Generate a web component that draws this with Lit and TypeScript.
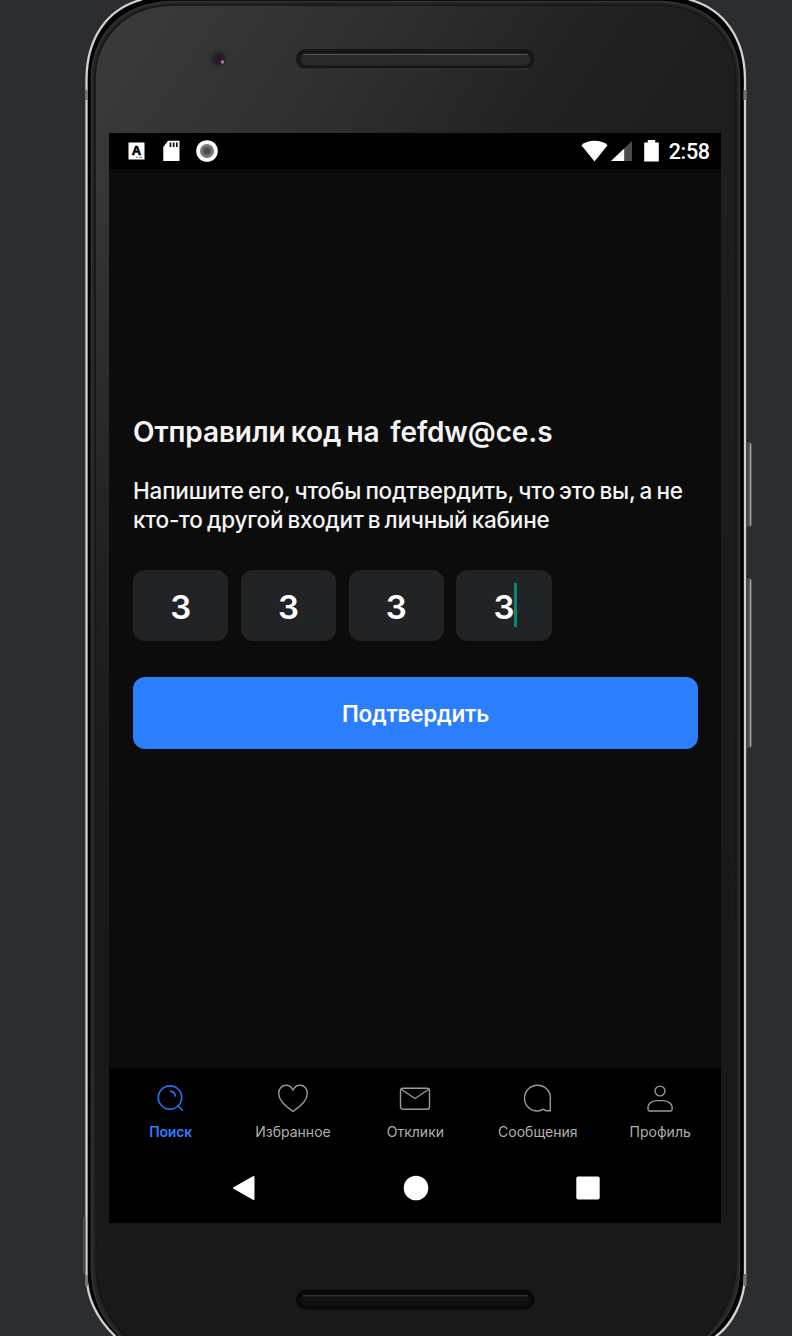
import { LitElement, html, css, svg } from "lit";
import { customElement } from "lit/decorators.js";

const tabs = [
  {
    label: "Поиск",
    cls: "search",
    icon: svg`<circle cx="15" cy="13.5" r="11.7"/><path d="M15 7.2c3.4.2 5.3 2.2 5.4 5.5M23.2 22l4.600 4.600"/>`,
  },
  {
    label: "Избранное",
    cls: "fav",
    icon: svg`<path d="M16 27.300C10.500 23.800 1.700 17.300 1.700 9.300C1.700 4.500 5 1.200 9 1.200C12 1.200 14.500 3 16 6C17.500 3 20 1.200 23 1.200C27 1.200 30.300 4.500 30.300 9.300C30.300 17.300 21.500 23.800 16 27.300Z"/>`,
  },
  {
    label: "Отклики",
    cls: "mail",
    icon: svg`<rect x="1.500" y="4.300" width="29" height="21" rx="2.500"/><path d="M2.500 5.500L16 14.500L29.500 5.500"/>`,
  },
  {
    label: "Сообщения",
    cls: "chat",
    icon: svg`<path d="M28.300 14.200V26.700H24L21.500 25.200C19.800 26.300 17.800 27 15.500 27C8.200 27 2.500 21.300 2.500 14.200C2.500 7 8.200 1.200 15.500 1.200C22.800 1.200 28.500 7 28.500 14.200Z"/>`,
  },
  {
    label: "Профиль",
    cls: "user",
    icon: svg`<circle cx="16" cy="7" r="4.900"/><path d="M4 24.800C3.600 19.500 8 16.800 12.500 16.600H19.500C24 16.800 28.400 19.500 28.200 24.800Q28 27 26.500 27H5.500Q4 27 4 24.800Z"/>`,
  },
];

@customElement("phone-shell")
class PhoneShell extends LitElement {
  static styles = css`
    :host { display: block; }
    .art { display: block; }
  `;
  render() {
    return html`<svg class="art" width="792" height="1336" viewBox="0 0 792 1336">
      <defs>
        <linearGradient id="body" gradientUnits="userSpaceOnUse" x1="90" y1="20" x2="560" y2="330">
          <stop offset="0" stop-color="#3b3b3b"/><stop offset=".4" stop-color="#303030"/>
          <stop offset=".75" stop-color="#222"/><stop offset="1" stop-color="#1e1e1e"/>
        </linearGradient>
        <linearGradient id="fade" x1="0" y1="0" x2="0" y2="1">
          <stop offset=".15" stop-color="#191919" stop-opacity="0"/><stop offset=".7" stop-color="#191919"/>
        </linearGradient>
        <clipPath id="inner">
          <path d="M95 80C95 38 125 6 172 5H660C706 6 736 38 736 80V1265C736 1300 716 1330 690 1350H142C112 1330 96 1300 96 1265Z"/>
        </clipPath>
      </defs>
      <path d="M86.500 80C86.500 38 106 10 142 0V-6H690V0C726 10 745.500 38 745.500 80V1275C745 1300 732 1325 716 1336V1346H115V1336C98 1320 87 1300 86.500 1275Z" fill="#030303"/>
      <path d="M91.500 80C91.500 38 118 3 172 1.500H660C712 3 739.500 38 739.500 80V1270C739 1305 722 1328 698 1345H130C108 1328 92 1305 91.500 1270Z" fill="#252525" stroke="#333" stroke-width="1.500"/>
      <g clip-path="url(#inner)">
        <rect x="90" y="0" width="650" height="1340" fill="url(#body)"/>
        <rect x="90" y="0" width="650" height="1340" fill="url(#fade)"/>
      </g>
      <path d="M95 80C95 38 125 6 172 5H660C706 6 736 38 736 80V1265C736 1300 716 1330 690 1350H142C112 1330 96 1300 96 1265Z" fill="none" stroke="#161616" stroke-width="1.500"/>
      <g fill="none" stroke="#d2d2d2" stroke-width="2.300">
        <path d="M142 -.5C107 9 86.500 38 86.500 80V1275C87 1300 98 1320 116 1337"/>
        <path d="M689 -.5C724 9 745 38 745 80V1275C745 1300 732 1325 715 1337"/>
      </g>
      <path d="M86.500 90v10M745 90v10M86.500 1275v11M745 1274v12" stroke="#747474" stroke-width="3"/>
      <g fill="#4b4b4c">
        <rect x="746.500" y="442" width="5" height="85" rx="1.500"/>
        <rect x="746.500" y="578" width="5" height="170" rx="1.500"/>
        <rect x="83" y="1217" width="2.500" height="56"/>
      </g>
      <path d="M750.500 443.500v82M750.500 579.500v167" stroke="#a0a0a0" stroke-width="1.600"/>
      <circle cx="218.500" cy="59" r="11" fill="#343334"/>
      <circle cx="218.500" cy="59" r="7.500" fill="#28262c"/>
      <circle cx="219" cy="59" r="4.500" fill="#211c30"/>
      <circle cx="222.500" cy="62" r="1.700" fill="#b87e86"/>
      <rect x="296" y="49" width="238.500" height="20" rx="10" fill="#161616"/>
      <rect x="300.500" y="53.500" width="230" height="12" rx="6" fill="#292929"/>
      <path d="M303 54.500H528" stroke="#555"/>
      <path d="M305 69H528" stroke="#3a3a3a"/>
      <rect x="296" y="1289.500" width="238.500" height="20" rx="10" fill="#080808"/>
      <rect x="300.500" y="1294.500" width="230" height="11.500" rx="5.500" fill="#111"/>
      <path d="M303 1295.800H528" stroke="#3c3c3c"/>
    </svg>`;
  }
}

@customElement("status-bar")
class StatusBar extends LitElement {
  static styles = css`
    :host { display: flex; justify-content: space-between; align-items: center; box-sizing: border-box;
      height: 36px; padding: 0 11.6px 0 18.5px; background: #000; color: #fff; }
    .group { display: flex; align-items: center; }
    .group svg { display: block; }
    .sd { margin-left: 17.5px; }
    .rec { margin-left: 15.5px; }
    .cell { margin-left: 3px; }
    .bat { margin-left: 12px; }
    .letter { font: 900 13px "Liberation Sans", Arial, sans-serif; }
    .time { font: 500 21.5px/36px Roboto, sans-serif; margin-left: 10px; padding-top: 1px; letter-spacing: -.3px; }
  `;
  render() {
    return html`
      <div class="group">
        <svg width="17" height="18" viewBox="0 0 17 18"><rect x=".5" y=".5" width="16" height="17" fill="#fff"/>
          <text class="letter" x="3.800" y="12.500" stroke="#000" stroke-width=".6">A</text><path d="M8 15.300h2M11 15.300h3" stroke="#777"/></svg>
        <svg class="sd" width="18" height="22" viewBox="0 0 18 22"><path d="M6 .8H17.500V21H1.300V7Z" fill="#fff"/>
          <path d="M8.500 2.500v4.500M11.700 2.500v4.500M14.800 2.500v4.500" stroke="#111" stroke-width="1.700"/></svg>
        <svg class="rec" width="22" height="22" viewBox="0 0 22 22"><circle cx="11" cy="11" r="10.800" fill="#fff"/><circle cx="11" cy="11" r="7" fill="#777"/><circle cx="11" cy="11" r="3.700" fill="#4a4a4a"/></svg>
      </div>
      <div class="group">
        <svg width="27" height="22" viewBox="0 0 27 22"><path d="M.4 5.300Q5 .8 13.500 .8T26.600 5.300L13.500 21.500Z" fill="#fff"/></svg>
        <svg class="cell" width="21" height="22" viewBox="0 0 21 22"><path d="M21 1V21H0Z" fill="#4b4b4b"/><path d="M13.200 8.400V21H0Z" fill="#fff"/></svg>
        <svg class="bat" width="15" height="22" viewBox="0 0 15 22"><path d="M3.800 2.500V0H11.200V2.500H14.800V21.500H.2V2.500Z" fill="#fff"/></svg>
        <div class="time">2:58</div>
      </div>`;
  }
}

@customElement("tab-bar")
class TabBar extends LitElement {
  static styles = css`
    :host { display: grid; grid-template-columns: repeat(5, 1fr); height: 83px; background: #000; }
    .tab { display: flex; flex-direction: column; align-items: center; padding-top: 16px; color: #b0b0b0;
      font: 400 14px/18px Inter, sans-serif; white-space: nowrap; }
    .tab svg { display: block; width: 32px; height: 30px; fill: none; stroke: #999; stroke-width: 1.4; }
    .label { margin-top: 9px; letter-spacing: 0; }
    .tab.search { color: #2a7dff; font-weight: 600; }
    .search .label { letter-spacing: -.2px; }
    .search svg { stroke: #2473ee; stroke-width: 1.7; }
  `;
  render() {
    return html`${tabs.map(
      (t) => html`<div class="tab ${t.cls}"><svg viewBox="0 0 32 30">${t.icon}</svg><span class="label">${t.label}</span></div>`
    )}`;
  }
}

@customElement("app-root")
class AppRoot extends LitElement {
  static styles = css`
    :host { display: block; }
    .stage { display: grid; width: 792px; height: 1336px; overflow: hidden; background: #2c2d31; }
    .shell, .screen { grid-area: 1 / 1; }
    .screen { display: flex; flex-direction: column; width: 612px; height: 1090px; margin: 133px 0 0 109.4px;
      background: #0c0c0c; color: #f4f4f4; font-family: Inter, "Noto Sans", sans-serif; }
    .content { flex: 1; padding: 245px 23.6px 0; }
    .title { margin: 0; font-size: 28px; line-height: 36px; font-weight: 600; white-space: pre; letter-spacing: -.1px; word-spacing: -1.6px; }
    .text { margin: 26px 0 0; font-size: 22.5px; line-height: 29px; font-weight: 500; white-space: nowrap; letter-spacing: -.19px; word-spacing: -1.6px; }
    .codes { display: flex; gap: 12.5px; margin-top: 35.5px; }
    .code { display: flex; align-items: center; justify-content: center; box-sizing: border-box; width: 95.3px; height: 71.5px;
      padding-top: 3px; border-radius: 12px; background: #222325; color: #fff; font-size: 33px; font-weight: 600; }
    .caret { width: 3px; height: 44px; margin: -4px -2px 0 -1px; background: #078776; }
    .button { display: flex; width: 565px; height: 72px; margin-top: 36px; padding: 0; border: 0; border-radius: 12px;
      align-items: center; justify-content: center; background: #2b7fff; color: #fff; font: 600 22.5px Inter, sans-serif; letter-spacing: -.25px; }
    .keys { display: flex; align-items: center; justify-content: space-between; box-sizing: border-box; height: 72px; padding: 2px 121px 0 123px; background: #000; }
  `;
  render() {
    return html`<main class="stage">
      <phone-shell class="shell"></phone-shell>
      <section class="screen">
        <status-bar></status-bar>
        <div class="content">
          <h1 class="title">Отправили код на  fefdw@ce.s</h1>
          <p class="text">Напишите его, чтобы подтвердить, что это вы, а не<br>кто-то другой входит в личный кабине</p>
          <div class="codes">
            ${[0, 1, 2, 3].map((i) => html`<div class="code">3${i === 3 ? html`<span class="caret"></span>` : ""}</div>`)}
          </div>
          <button class="button">Подтвердить</button>
        </div>
        <tab-bar></tab-bar>
        <div class="keys">
          <svg width="24" height="26" viewBox="0 0 24 26"><path d="M21.500 2L2 13L21.500 24Z" fill="#fff" stroke="#fff" stroke-width="2" stroke-linejoin="round"/></svg>
          <svg width="26" height="26" viewBox="0 0 26 26"><circle cx="13" cy="13" r="12.300" fill="#fff"/></svg>
          <svg width="24" height="24" viewBox="0 0 24 24"><rect x=".3" y=".5" width="23.400" height="23" rx="2" fill="#fff"/></svg>
        </div>
      </section>
    </main>`;
  }
}
